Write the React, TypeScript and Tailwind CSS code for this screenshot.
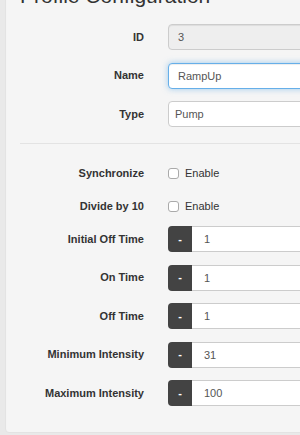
const fields = [
  { label: "Initial Off Time", value: "1" },
  { label: "On Time", value: "1" },
  { label: "Off Time", value: "1" },
  { label: "Minimum Intensity", value: "31" },
  { label: "Maximum Intensity", value: "100" },
];

const Label = ({ children }: { children: string }) => (
  <div className="w-[124px] shrink-0 text-right text-[11px] font-bold text-[#333]">{children}</div>
);

const App = () => {
  return (
    <div className="w-[300px] h-[435px] overflow-hidden bg-[#e9e9e9] font-['Liberation_Sans',Arial,sans-serif]">
      <div className="ml-[5px] mt-[-17px] w-[420px] h-[450px] rounded-bl-[4px] border border-[#e3e3e3] bg-[#f5f5f5] pl-[14px] shadow-[inset_0_1px_1px_rgba(0,0,0,0.05)]">
        <div className="h-[24px] leading-[24px] text-[21px] text-[#333]">Profile Configuration</div>

        <div className="mt-[16px] flex flex-col gap-[12.5px]">
          <div className="flex items-center gap-[24px]">
            <Label>ID</Label>
            <div className="h-[26px] flex-1 rounded-[4px] border border-[#ccc] bg-[#eee] pl-[9px] text-[11px] leading-[24px] text-[#555] shadow-[inset_0_1px_1px_rgba(0,0,0,0.075)]">
              3
            </div>
          </div>
          <div className="flex items-center gap-[24px]">
            <Label>Name</Label>
            <div className="h-[26px] flex-1 rounded-[4px] border border-[#66afe9] bg-white pl-[9px] text-[11px] leading-[24px] text-[#555] shadow-[inset_0_1px_1px_rgba(0,0,0,0.075),0_0_6px_rgba(102,175,233,0.6)]">
              RampUp
            </div>
          </div>
          <div className="flex items-center gap-[24px]">
            <Label>Type</Label>
            <div className="h-[26px] flex-1 rounded-[4px] border border-[#ccc] bg-white pl-[6px] text-[11px] leading-[24px] text-[#555]">
              Pump
            </div>
          </div>
        </div>

        <div className="mt-[16px] h-px bg-[#e3e3e3]" />

        <div className="mt-[19px] flex flex-col gap-[13px]">
          {["Synchronize", "Divide by 10"].map((l) => (
            <div key={l} className="flex h-[20px] items-center gap-[24px]">
              <Label>{l}</Label>
              <div className="flex items-center gap-[6px]">
                <span className="h-[11px] w-[11px] rounded-[3px] border border-[#aaa] bg-white" />
                <span className="text-[11px] text-[#333]">Enable</span>
              </div>
            </div>
          ))}
        </div>

        <div className="mt-[10px] flex flex-col gap-[12.5px]">
          {fields.map((f) => (
            <div key={f.label} className="flex items-center gap-[24px]">
              <Label>{f.label}</Label>
              <div className="flex h-[26px] flex-1">
                <div className="flex w-[24px] items-center justify-center rounded-l-[4px] bg-[#434343] text-[11px] font-bold text-white">
                  -
                </div>
                <div className="flex-1 border border-l-0 border-[#ccc] bg-white pl-[12px] text-[11px] leading-[24px] text-[#555]">
                  {f.value}
                </div>
              </div>
            </div>
          ))}
        </div>
      </div>
    </div>
  );
};

export default App;
